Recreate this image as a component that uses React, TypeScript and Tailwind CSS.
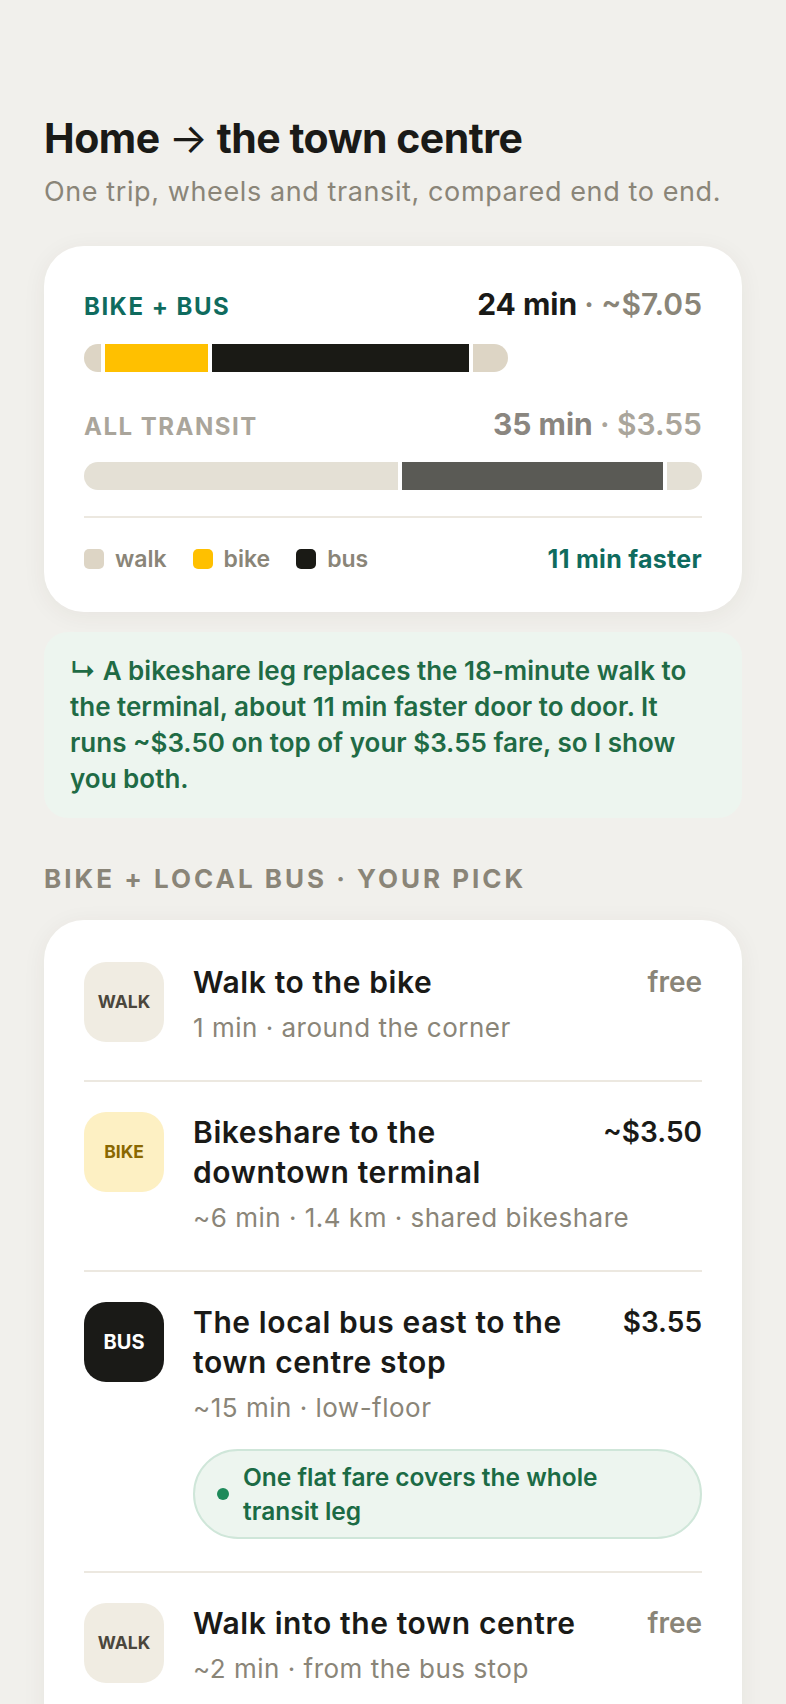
type Seg = { min: number; color: string };

const bikeBus: Seg[] = [
  { min: 1, color: "bg-[#ddd5c5]" },
  { min: 6, color: "bg-[#ffc000]" },
  { min: 15, color: "bg-[#1a1a15]" },
  { min: 2, color: "bg-[#ddd5c5]" },
];

const allTransit: Seg[] = [
  { min: 18, color: "bg-[#e4e0d5]" },
  { min: 15, color: "bg-[#5a5a55]" },
  { min: 2, color: "bg-[#e4e0d5]" },
];

const longest = 35;

function Bar({ segs }: { segs: Seg[] }) {
  const sum = segs.reduce((s, x) => s + x.min, 0);
  return (
    <div className="flex h-[28px] gap-[4px]" style={{ width: `${(sum / longest) * 100}%` }}>
      {segs.map((s, i) => (
        <div
          key={i}
          className={`${s.color} h-full first:rounded-l-full last:rounded-r-full`}
          style={{ flexGrow: s.min, flexBasis: 0 }}
        />
      ))}
    </div>
  );
}

type Leg = {
  tag: string;
  tagClass: string;
  boxClass: string;
  title: React.ReactNode;
  price: string;
  priceClass: string;
  sub: string;
  pill?: boolean;
};

const legs: Leg[] = [
  {
    tag: "WALK",
    tagClass: "text-[17.5px] text-[#4a463c]",
    boxClass: "bg-[#f0ece2]",
    title: "Walk to the bike",
    price: "free",
    priceClass: "text-[#8a8578]",
    sub: "1 min · around the corner",
  },
  {
    tag: "BIKE",
    tagClass: "text-[17.5px] text-[#8a6800]",
    boxClass: "bg-[#fdf0c3]",
    title: (
      <>
        Bikeshare to the
        <br />
        downtown terminal
      </>
    ),
    price: "~$3.50",
    priceClass: "text-[#1a1a17]",
    sub: "~6 min · 1.4 km · shared bikeshare",
  },
  {
    tag: "BUS",
    tagClass: "text-[20px] text-white",
    boxClass: "bg-[#1a1a17]",
    title: (
      <>
        The local bus east to the
        <br />
        town centre stop
      </>
    ),
    price: "$3.55",
    priceClass: "text-[#1a1a17]",
    sub: "~15 min · low-floor",
    pill: true,
  },
  {
    tag: "WALK",
    tagClass: "text-[17.5px] text-[#4a463c]",
    boxClass: "bg-[#f0ece2]",
    title: "Walk into the town centre",
    price: "free",
    priceClass: "text-[#8a8578]",
    sub: "~2 min · from the bus stop",
  },
];

const legend = [
  { label: "walk", color: "bg-[#ddd5c5]" },
  { label: "bike", color: "bg-[#ffc000]" },
  { label: "bus", color: "bg-[#1a1a15]" },
];

export default function App() {
  return (
    <div className="min-h-screen bg-[#f1f0ec] px-[44px] pt-[114px] pb-10 font-['Inter',sans-serif]">
      {/* Header */}
      <h1 className="text-[41px] font-bold leading-[48px] tracking-[-0.5px] text-[#1a1a17]">
        Home <span className="font-normal">→</span> the town centre
      </h1>
      <p className="mt-[12px] text-[27px] leading-[36px] tracking-[0.6px] text-[#8a8578]">
        One trip, wheels and transit, compared end to end.
      </p>

      {/* Comparison card */}
      <div className="mt-[36px] rounded-[40px] bg-white px-10 pt-10 pb-[38px] shadow-[0_4px_24px_rgba(60,50,30,0.06)]">
        <div className="flex items-baseline justify-between leading-[36px]">
          <span className="text-[24px] font-bold tracking-[1.5px] text-[#0f6b5e]">BIKE + BUS</span>
          <span className="text-[30px] font-bold text-[#1a1a17]">
            24 min <span className="font-semibold text-[#8a8578]">· ~$7.05</span>
          </span>
        </div>
        <div className="mt-[19px]">
          <Bar segs={bikeBus} />
        </div>

        <div className="mt-[34px] flex items-baseline justify-between leading-[36px]">
          <span className="text-[24px] font-bold tracking-[1.5px] text-[#aaa59b]">ALL TRANSIT</span>
          <span className="text-[30px] font-bold text-[#8a8680]">
            35 min <span className="font-semibold text-[#aaa59b]">· $3.55</span>
          </span>
        </div>
        <div className="mt-[17px]">
          <Bar segs={allTransit} />
        </div>

        <div className="mt-[26px] h-[2px] bg-[#ece8e0]" />

        <div className="mt-[26px] flex items-center justify-between leading-[30px]">
          <div className="flex items-center gap-[26px] text-[23px] font-semibold text-[#8a8578]">
            {legend.map((l) => (
              <div key={l.label} className="flex items-center gap-[11px]">
                <span className={`h-5 w-5 rounded-[5px] ${l.color}`} />
                {l.label}
              </div>
            ))}
          </div>
          <span className="text-[25px] font-bold tracking-[0.3px] text-[#0f6b5e]">11 min faster</span>
        </div>
      </div>

      {/* Note */}
      <div className="mt-5 rounded-[24px] bg-[#edf5ef] px-[26px] py-[21px] text-[26px] font-semibold leading-[36px] text-[#1f6b45]">
        <div className="whitespace-nowrap">↳ A bikeshare leg replaces the 18-minute walk to</div>
        <div className="whitespace-nowrap">the terminal, about 11 min faster door to door. It</div>
        <div className="whitespace-nowrap">runs ~$3.50 on top of your $3.55 fare, so I show</div>
        <div className="whitespace-nowrap">you both.</div>
      </div>

      {/* Legs */}
      <div className="mt-[46px] text-[26px] font-bold leading-[30px] tracking-[3px] text-[#8a8578]">
        BIKE + LOCAL BUS · YOUR PICK
      </div>

      <div className="mt-[26px] rounded-[40px] bg-white px-10 pt-[12px] pb-8 shadow-[0_4px_24px_rgba(60,50,30,0.06)]">
        {legs.map((leg, i) => (
          <div
            key={i}
            className={`flex gap-[29px] pt-[30px] ${leg.pill ? "pb-[32px]" : "pb-[36px]"} ${
              i > 0 ? "border-t-2 border-[#ece8e0]" : ""
            }`}
          >
            <div className={`flex h-20 w-20 shrink-0 items-center justify-center rounded-[22px] ${leg.boxClass}`}>
              <span className={`font-bold ${leg.tagClass}`}>{leg.tag}</span>
            </div>
            <div className="min-w-0 flex-1">
              <div className="flex items-start justify-between gap-4">
                <div className="whitespace-nowrap text-[30px] font-semibold leading-[40px] tracking-[0.6px] text-[#1a1a17]">
                  {leg.title}
                </div>
                <div className={`text-[28px] font-semibold leading-[40px] ${leg.priceClass}`}>{leg.price}</div>
              </div>
              <div className="mt-[10px] text-[26px] leading-[32px] tracking-[0.5px] text-[#8a8578]">{leg.sub}</div>
              {leg.pill && (
                <div className="mt-[25px] flex items-center gap-[14px] rounded-full border-2 border-[#cfe6d9] bg-[#edf5ef] py-[9px] pr-6 pl-[22px]">
                  <span className="h-3 w-3 shrink-0 rounded-full bg-[#1e8a5a]" />
                  <span className="text-[24.5px] font-semibold leading-[34px] text-[#1b6b45]">
                    One flat fare covers the whole
                    <br />
                    transit leg
                  </span>
                </div>
              )}
            </div>
          </div>
        ))}
      </div>
    </div>
  );
}
